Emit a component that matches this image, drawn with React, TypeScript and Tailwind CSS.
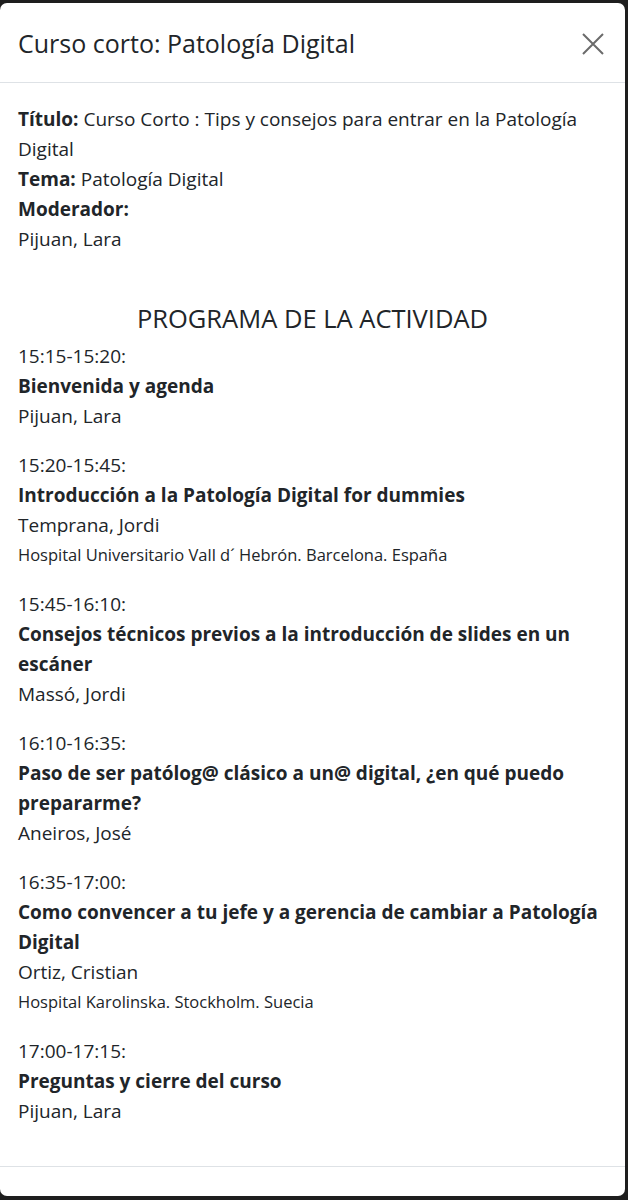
const items = [
  { time: '15:15-15:20:', title: 'Bienvenida y agenda', speaker: 'Pijuan, Lara' },
  {
    time: '15:20-15:45:',
    title: 'Introducción a la Patología Digital for dummies',
    speaker: 'Temprana, Jordi',
    place: 'Hospital Universitario Vall d´ Hebrón. Barcelona. España',
  },
  {
    time: '15:45-16:10:',
    title: 'Consejos técnicos previos a la introducción de slides en un escáner',
    speaker: 'Massó, Jordi',
  },
  {
    time: '16:10-16:35:',
    title: 'Paso de ser patólog@ clásico a un@ digital, ¿en qué puedo prepararme?',
    speaker: 'Aneiros, José',
  },
  {
    time: '16:35-17:00:',
    title: 'Como convencer a tu jefe y a gerencia de cambiar a Patología Digital',
    speaker: 'Ortiz, Cristian',
    place: 'Hospital Karolinska. Stockholm. Suecia',
  },
  { time: '17:00-17:15:', title: 'Preguntas y cierre del curso', speaker: 'Pijuan, Lara' },
];

export default function App() {
  return (
    <div
      className="h-[1200px] bg-[#1e1e1e] pt-[3px] pr-[3px] pb-[4px] text-[#212529]"
      style={{ fontFamily: '"Open Sans", "Noto Sans", sans-serif' }}
    >
      <div className="flex h-full flex-col rounded-[7px] bg-white">
        <div className="flex h-[80px] shrink-0 items-center justify-between border-b border-[#dee2e6] pl-[18px] pr-[20px] pt-[2px]">
          <h5 className="text-[25px] leading-none">Curso corto: Patología Digital</h5>
          <svg width="24" height="24" viewBox="0 0 24 24" className="text-[#6b6b6b]">
            <path d="M2 2L22 22M22 2L2 22" stroke="currentColor" strokeWidth="2" />
          </svg>
        </div>

        <div className="flex-1 px-[18px] pt-[21px] text-[19px] leading-[30px]">
          <p>
            <b className="font-bold">Título:</b> Curso Corto : Tips y consejos para entrar en la Patología Digital
          </p>
          <p>
            <b className="font-bold">Tema:</b> Patología Digital
          </p>
          <p className="font-bold">Moderador:</p>
          <p>Pijuan, Lara</p>

          <h4 className="mt-[47px] text-center text-[25.5px] leading-[34px]">PROGRAMA DE LA ACTIVIDAD</h4>

          <div className="flex flex-col gap-[19px] pt-[6px]">
            {items.map((it) => (
              <div key={it.time}>
                <div>{it.time}</div>
                <div className="font-bold">{it.title}</div>
                <div>{it.speaker}</div>
                {it.place && <div className="text-[16.5px]">{it.place}</div>}
              </div>
            ))}
          </div>
        </div>

        <div className="h-[30px] shrink-0 border-t border-[#dee2e6]" />
      </div>
    </div>
  );
}
